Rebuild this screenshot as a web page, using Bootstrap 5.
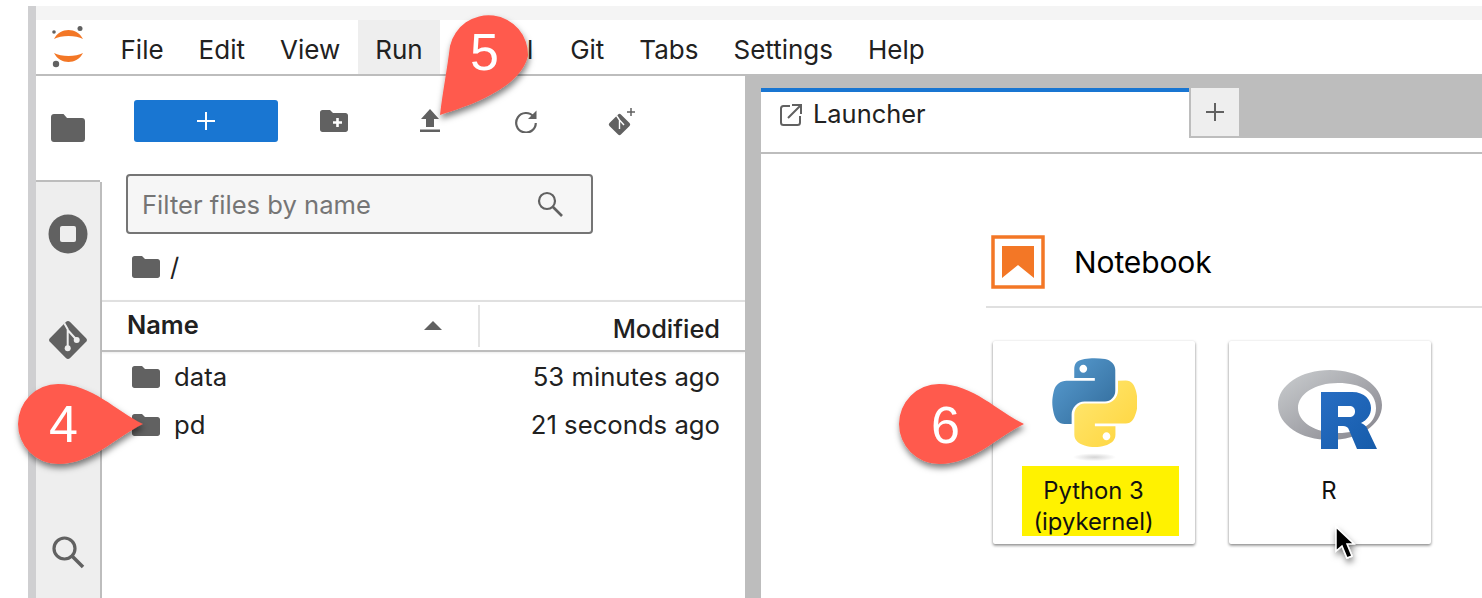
<!DOCTYPE html>
<html lang="en">
<head>
  <meta charset="UTF-8" />
  <meta name="viewport" content="width=device-width, initial-scale=1" />
  <title>JupyterLab Launcher</title>
  <link href="https://cdn.jsdelivr.net/npm/bootstrap@5.3.0/dist/css/bootstrap.min.css" rel="stylesheet" />
  <style>
    html, body { height: 100%; overflow: hidden; background: #fff; }
    body { font-family: Inter, "Liberation Sans", sans-serif; color: #212121; position: relative; }
    .lab-frame { margin: 6px 0 0 28px; height: 592px; border-left: 8px solid #cfcfd1; display: flex; flex-direction: column; }
    .top-strip { height: 14px; background: #f4f4f4; flex: none; }
    .menu-bar { height: 56px; flex: none; border-bottom: 2px solid #bdbdbd; display: flex; flex-wrap: nowrap; justify-content: flex-start; align-items: stretch; background: #fff; padding: 0; }
    .lab-logo { width: 67px; flex: none; display: flex; align-items: center; padding-left: 16px; }
    .menu-link { font-size: 26px; color: #212121; display: flex; align-items: center; height: 54px; padding: 5px 17.5px 0; }
    .menu-link.is-open { background: #eee; }
    .menu-link.is-tight { letter-spacing: -.6px; padding-right: 20px; }
    .lab-main { flex: 1; display: flex; min-height: 0; }
    .side-rail { width: 66px; flex: none; display: flex; flex-direction: column; background: #eee; border-right: 2px solid #bdbdbd; overflow: visible; }
    .rail-tab { height: 104px; margin-bottom: 2px; flex: none; display: flex; align-items: center; justify-content: center; }
    .rail-tab.is-active { background: #fff; width: 64px; padding-right: 0; margin-bottom: 0; border-bottom: 2px solid #bdbdbd; box-sizing: content-box; box-shadow: 2px 0 0 #fff; }
    .rail-spacer { height: 104px; margin-bottom: 2px; flex: none; }
    .file-panel { width: 643px; flex: none; background: #fff; display: flex; flex-direction: column; }
    .file-tools { display: flex; align-items: center; padding: 24px 0 0 32px; height: 66px; flex: none; }
    .new-btn { width: 144px; height: 42px; padding: 0; border-radius: 3px; background: #1976d2; border: 0; display: flex; align-items: center; justify-content: center; }
    .tool-btn { width: 96px; height: 42px; display: flex; align-items: center; justify-content: center; }
    .tool-first { margin-left: 8px; }
    .filter-box { margin: 32px 0 0 24px; width: 467px; height: 60px; flex: none; border: 2px solid #757575; border-radius: 4px; background: #f6f6f6; display: flex; align-items: center; padding: 0 28px 0 14px; }
    .filter-input { flex: 1; min-width: 0; background: transparent; border: 0; padding: 3px 0 0; font-size: 25.6px; border-radius: 0; box-shadow: none; }
    .filter-input::placeholder { color: #757575; opacity: 1; }
    .crumbs { height: 66px; display: flex; align-items: center; padding-left: 30px; font-size: 25.6px; gap: 10px; flex: none; }
    .list-head { height: 52px; flex: none; border-top: 2px solid #e0e0e0; border-bottom: 2px solid #bdbdbd; display: flex; align-items: center; font-size: 25.4px; padding: 0 25px; box-shadow: 0 1px 2px rgba(0,0,0,.08); }
    .head-name { font-weight: 600; flex: 1; display: flex; justify-content: space-between; align-items: center; padding-right: 36px; border-right: 2px solid #e3e3e3; height: 42px; margin-top: -1px; }
    .head-mod { width: 240px; text-align: right; font-weight: 500; padding-top: 6px; }
    .file-row { height: 48px; display: flex; align-items: center; padding: 0 25px 0 30px; font-size: 25.7px; border: 0; background: transparent; color: #212121; }
    .file-list { padding-top: 1px; }
    .file-row .file-when { margin-left: auto; }
    .file-row .file-name { margin-left: 14px; }
    .split-bar { width: 16px; flex: none; background: #bdbdbd; }
    .launch-pane { flex: 1; min-width: 0; display: flex; flex-direction: column; background: #fff; }
    .tab-strip { height: 78px; flex: none; display: flex; align-items: flex-start; padding-top: 12px; border-bottom: 2px solid #bdbdbd; background: linear-gradient(#bdbdbd 62px, #fff 62px); }
    .doc-tab { width: 428px; height: 64px; flex: none; background: #fff; border-top: 4px solid #1976d2; display: flex; align-items: center; gap: 10px; padding: 0 0 15px 18px; font-size: 25.4px; }
    .add-tab { width: 48px; height: 48px; flex: none; margin-left: 2px; background: #eee; display: flex; align-items: center; justify-content: center; }
    .launch-body { padding: 81px 0 0 225px; }
    .section-head { display: flex; align-items: center; gap: 29px; padding: 0 0 17px 5px; border-bottom: 2px solid #e0e0e0; font-size: 30px; color: #000; letter-spacing: -.1px; }
    .kernel-row { display: flex; gap: 34px; padding: 33px 0 0 7px; }
    .kernel-card { width: 202px; height: 203px; border: 0; border-radius: 2px; box-shadow: 0 1px 3px rgba(0,0,0,.35), 0 2px 3px rgba(0,0,0,.2); display: flex; flex-direction: column; align-items: center; font-size: 23.8px; color: #111; text-align: center; }
    .kernel-pic { height: 125px; flex: none; display: flex; align-items: flex-start; }
    .pic-python { padding-top: 17px; }
    .pic-r { padding-top: 29px; }
    .kernel-label { width: 100%; height: 70px; display: flex; flex-direction: column; align-items: center; justify-content: flex-start; padding: 9px 2px 0 0; line-height: 31px; }
    .kernel-label.is-marked { background: #fff200; width: 157px; align-self: flex-start; margin-left: 29px; padding-right: 14px; }
    .callout { position: absolute; left: 0; top: 0; pointer-events: none; }
    .callout-num { position: absolute; font-family: "Liberation Sans", Arial, sans-serif; font-size: 52px; line-height: 1; color: #fff; }
    .num-four { left: 49px; top: 398px; }
    .num-five { left: 470px; top: 26px; }
    .num-six { left: 931px; top: 399px; }
  </style>
</head>
<body>
  <div class="lab-frame">
    <div class="top-strip"></div>
    <nav class="menu-bar navbar">
      <div class="lab-logo">
        <svg width="34" height="42" viewBox="0 0 34 42">
          <path d="M2 13C8 1 25 1 31 13C24 9 9 9 2 13Z" fill="#f37726"/>
          <path d="M2 27C8 39 25 39 31 27C24 31 9 31 2 27Z" fill="#f37726"/>
          <circle cx="28" cy="2.500" r="2.500" fill="#616161"/>
          <circle cx="2" cy="6" r="1.800" fill="#616161"/>
          <circle cx="4" cy="38" r="3.200" fill="#616161"/>
        </svg>
      </div>
      <span class="menu-link">File</span>
      <span class="menu-link">Edit</span>
      <span class="menu-link">View</span>
      <span class="menu-link is-open">Run</span>
      <span class="menu-link is-tight">Kernel</span>
      <span class="menu-link">Git</span>
      <span class="menu-link">Tabs</span>
      <span class="menu-link">Settings</span>
      <span class="menu-link">Help</span>
    </nav>
    <div class="lab-main">
      <div class="side-rail">
        <div class="rail-tab is-active">
          <svg width="34" height="28" viewBox="0 0 34 28"><path d="M3 0H12.500L16 4H31C32.700 4 34 5.300 34 7V25C34 26.700 32.700 28 31 28H3C1.300 28 0 26.700 0 25V3C0 1.300 1.300 0 3 0Z" fill="#616161"/></svg>
        </div>
        <div class="rail-tab">
          <svg width="40" height="40" viewBox="0 0 40 40"><circle cx="20" cy="20" r="19.500" fill="#616161"/><rect x="12" y="12" width="16" height="16" rx="2" fill="#eee"/></svg>
        </div>
        <div class="rail-tab">
          <svg width="42" height="42" viewBox="0 0 42 42"><rect x="6.850" y="6.850" width="28.300" height="28.300" rx="3" transform="rotate(45 21 21)" fill="#616161"/><path d="M17.300 4.300L20.700 10.300V29.300M20.700 11L29.700 21" stroke="#eee" stroke-width="2" fill="none"/><circle cx="20.700" cy="29.300" r="3" fill="#eee"/><circle cx="29.700" cy="21" r="3" fill="#eee"/></svg>
        </div>
        <div class="rail-spacer"></div>
        <div class="rail-tab">
          <svg width="34" height="34" viewBox="0 0 34 34"><circle cx="13.500" cy="13.500" r="10.500" fill="none" stroke="#616161" stroke-width="3.200"/><path d="M21 21 L32 32" stroke="#616161" stroke-width="3.600"/></svg>
        </div>
      </div>
      <div class="file-panel">
        <div class="file-tools">
          <button class="btn btn-primary new-btn" type="button" aria-label="New launcher">
            <svg width="20" height="20" viewBox="0 0 20 20"><path d="M10 1V19M1 10H19" stroke="#fff" stroke-width="2"/></svg>
          </button>
          <span class="tool-btn tool-first">
            <svg width="28" height="22" viewBox="0 0 28 22"><path d="M2.500 0H10L13 3H25.500C26.900 3 28 4.100 28 5.500V19.500C28 20.900 26.900 22 25.500 22H2.500C1.100 22 0 20.900 0 19.500V2.500C0 1.100 1.100 0 2.500 0Z" fill="#616161"/><path d="M17.500 8V17M13 12.500H22" stroke="#fff" stroke-width="2.600"/></svg>
          </span>
          <span class="tool-btn">
            <svg width="20" height="24" viewBox="0 0 20 24"><path d="M10 0L19 10H14V18H6V10H1Z" fill="#616161"/><rect y="20.500" width="20" height="2.500" fill="#616161"/></svg>
          </span>
          <span class="tool-btn">
            <svg width="24" height="24" viewBox="0 0 24 24"><path d="M19.500 7.500A9.800 9.800 0 1 0 21.800 14" fill="none" stroke="#616161" stroke-width="2.200"/><path d="M22.500 1.500V10H14Z" fill="#616161"/></svg>
          </span>
          <span class="tool-btn">
            <svg width="28" height="29" viewBox="0 0 28 29"><rect x="3.400" y="9.400" width="16.200" height="16.200" rx="2" transform="rotate(45 11.500 17.500)" fill="#616161"/><path d="M8.500 8.500L11.500 13V22M11.500 13L16 18" stroke="#fff" stroke-width="1.400" fill="none"/><path d="M23 1V9M19 5H27" stroke="#616161" stroke-width="1.500"/></svg>
          </span>
        </div>
        <div class="filter-box">
          <input class="form-control filter-input" type="text" placeholder="Filter files by name" />
          <svg width="26" height="26" viewBox="0 0 26 26"><circle cx="10" cy="10" r="8" fill="none" stroke="#616161" stroke-width="2.200"/><path d="M16 16L25 25" stroke="#616161" stroke-width="2.600"/></svg>
        </div>
        <div class="crumbs">
          <svg width="28" height="22" viewBox="0 0 28 22"><path d="M2.500 0H10L13 3H25.500C26.900 3 28 4.100 28 5.500V19.500C28 20.900 26.900 22 25.500 22H2.500C1.100 22 0 20.900 0 19.500V2.500C0 1.100 1.100 0 2.500 0Z" fill="#616161"/></svg>
          <span>/</span>
        </div>
        <div class="list-head">
          <div class="head-name"><span>Name</span>
            <svg width="18" height="9" viewBox="0 0 18 9"><path d="M9 0L18 9H0Z" fill="#616161"/></svg>
          </div>
          <div class="head-mod">Modified</div>
        </div>
        <div class="file-list list-group list-group-flush">
          <div class="file-row list-group-item">
            <svg width="28" height="22" viewBox="0 0 28 22"><path d="M2.500 0H10L13 3H25.500C26.900 3 28 4.100 28 5.500V19.500C28 20.900 26.900 22 25.500 22H2.500C1.100 22 0 20.900 0 19.500V2.500C0 1.100 1.100 0 2.500 0Z" fill="#616161"/></svg>
            <span class="file-name">data</span><span class="file-when">53 minutes ago</span>
          </div>
          <div class="file-row list-group-item">
            <svg width="28" height="22" viewBox="0 0 28 22"><path d="M2.500 0H10L13 3H25.500C26.900 3 28 4.100 28 5.500V19.500C28 20.900 26.900 22 25.500 22H2.500C1.100 22 0 20.900 0 19.500V2.500C0 1.100 1.100 0 2.500 0Z" fill="#616161"/></svg>
            <span class="file-name">pd</span><span class="file-when">21 seconds ago</span>
          </div>
        </div>
      </div>
      <div class="split-bar"></div>
      <div class="launch-pane">
        <div class="tab-strip">
          <div class="doc-tab">
            <svg width="24" height="24" viewBox="0 0 24 24"><path d="M11 3H4.500C3.100 3 2 4.100 2 5.500V19.500C2 20.900 3.100 22 4.500 22H18.500C19.900 22 21 20.900 21 19.500V13" fill="none" stroke="#616161" stroke-width="2"/><path d="M9 15L21.500 2.500M13 2H22V11" fill="none" stroke="#616161" stroke-width="2"/></svg>
            <span>Launcher</span>
          </div>
          <div class="add-tab">
            <svg width="20" height="20" viewBox="0 0 20 20"><path d="M10 1V19M1 10H19" stroke="#616161" stroke-width="2"/></svg>
          </div>
        </div>
        <div class="launch-body">
          <div class="section-head">
            <svg width="54" height="54" viewBox="0 0 54 54"><rect x="2" y="2" width="50" height="50" fill="#fff" stroke="#f37726" stroke-width="3.500"/><path d="M11 11H43V43L27 30L11 43Z" fill="#f37726"/></svg>
            <span>Notebook</span>
          </div>
          <div class="kernel-row">
            <div class="card kernel-card">
              <div class="kernel-pic pic-python">
                <svg width="85" height="108" viewBox="0 0 110 135" preserveAspectRatio="none">
                  <defs>
                    <linearGradient id="pyBlue" x1="0" y1="0" x2="1" y2="1"><stop offset="0" stop-color="#5a9fd4"/><stop offset="1" stop-color="#306998"/></linearGradient>
                    <linearGradient id="pyYellow" x1="0" y1="0" x2="1" y2="1"><stop offset="0" stop-color="#ffe873"/><stop offset="1" stop-color="#ffd43b"/></linearGradient>
                    <radialGradient id="pyShade"><stop offset="0" stop-color="#b8b8b8" stop-opacity=".6"/><stop offset="1" stop-color="#b8b8b8" stop-opacity="0"/></radialGradient>
                  </defs>
                  <path d="M54.900.2c-4.600 0-9 .4-12.800 1.100C30.800 3.300 28.800 7.400 28.800 15v10.100h26.600v3.400H18.800c-7.700 0-14.500 4.600-16.600 13.500-2.400 10.100-2.500 16.400 0 27 1.900 7.900 6.400 13.500 14.100 13.500h9.100V70.900c0-8.800 7.600-16.500 16.600-16.500h26.600c7.400 0 13.300-6.100 13.300-13.500V15c0-7.200-6.100-12.600-13.300-13.800C63.900.4 59.500.2 54.900.2zM40.500 8.400c2.700 0 5 2.300 5 5 0 2.700-2.200 5-5 5-2.800 0-5-2.200-5-5 0-2.800 2.200-5 5-5z" fill="url(#pyBlue)" fill-rule="evenodd"/>
                  <path d="M85.400 28.500v11.700c0 9.100-7.700 16.700-16.600 16.700H42.200c-7.300 0-13.300 6.200-13.300 13.500v25.400c0 7.200 6.300 11.500 13.300 13.500 8.400 2.500 16.500 2.900 26.600 0 6.700-1.900 13.300-5.800 13.300-13.500V85.200H55.500v-3.400h39.900c7.700 0 10.600-5.400 13.300-13.500 2.800-8.300 2.700-16.300 0-27-1.900-7.700-5.600-13.300-13.300-13.300zM70.500 92.700c2.800 0 5 2.200 5 5 0 2.800-2.300 5-5 5-2.700 0-5-2.300-5-5 0-2.800 2.300-5 5-5z" fill="url(#pyYellow)" fill-rule="evenodd"/>
                  <ellipse cx="55" cy="124" rx="28" ry="5" fill="url(#pyShade)"/>
                </svg>
              </div>
              <div class="kernel-label is-marked"><span>Python 3</span><span>(ipykernel)</span></div>
            </div>
            <div class="card kernel-card">
              <div class="kernel-pic pic-r">
                <svg width="105" height="82" viewBox="0 0 105 82">
                  <defs>
                    <linearGradient id="rGrey" x1="0" y1="0" x2="1" y2="1"><stop offset="0" stop-color="#cbced0"/><stop offset="1" stop-color="#84838b"/></linearGradient>
                    <linearGradient id="rBlue" x1="0" y1="0" x2="1" y2="1"><stop offset="0" stop-color="#276dc3"/><stop offset="1" stop-color="#165caa"/></linearGradient>
                  </defs>
                  <path d="M52 70C23 70 0 55 0 35S23 0 52 0s52 15 52 35-23 35-52 35zM60 13C37 13 20 24 20 38s17 25 40 25 38-9 38-25-15-25-38-25z" fill="url(#rGrey)" fill-rule="evenodd"/>
                  <path d="M43 22H74C87 22 93 30 93 38C93 45 89 50 83 53C86 54 88 56 89 58L99 79H79L71 60C70 57 68 56 65 56H60V79H43ZM60 36V47H71C75 47 77 45 77 41.500C77 38 75 36 71 36Z" fill="url(#rBlue)" fill-rule="evenodd"/>
                </svg>
              </div>
              <div class="kernel-label"><span>R</span></div>
            </div>
          </div>
        </div>
      </div>
    </div>
  </div>

  <!-- callouts and pointer sit on top of the app -->
  <svg class="callout" width="1482" height="598" viewBox="0 0 1482 598">
    <defs>
      <filter id="pinShadow" x="-30%" y="-30%" width="170%" height="170%"><feDropShadow dx="1" dy="4" stdDeviation="3" flood-color="#000" flood-opacity=".5"/></filter>
    </defs>
    <g fill="#ff5a4d" filter="url(#pinShadow)">
      <path d="M143 424C116 411 92 384 58 384A40 40 0 0 0 58 464C92 464 116 437 143 424Z"/>
      <path d="M440 115C443 90 447 70 450 46A39.500 39.500 0 0 1 528 56C521 85 480 103 440 115Z"/>
      <path d="M1024 424C997 411 973 384 939 384A40 40 0 0 0 939 464C973 464 997 437 1024 424Z"/>
    </g>
    <path d="M1336 527V551L1342 546L1347 558L1352 556L1347 544H1354Z" fill="#000" stroke="#fff" stroke-width="1.500" filter="url(#pinShadow)"/>
  </svg>
  <span class="callout-num num-four">4</span>
  <span class="callout-num num-five">5</span>
  <span class="callout-num num-six">6</span>

  <script src="https://cdn.jsdelivr.net/npm/bootstrap@5.3.0/dist/js/bootstrap.bundle.min.js"></script>
</body>
</html>
